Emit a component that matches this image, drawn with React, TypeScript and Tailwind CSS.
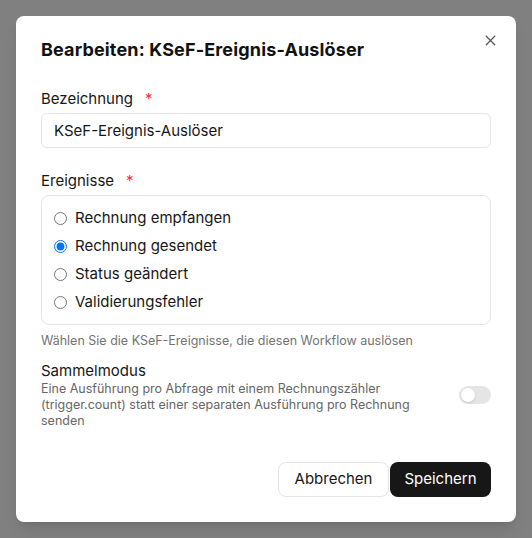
import { useState } from 'react';
import { X } from 'lucide-react';

const events = [
  'Rechnung empfangen',
  'Rechnung gesendet',
  'Status geändert',
  'Validierungsfehler',
];

export default function App() {
  const [name, setName] = useState('KSeF-Ereignis-Auslöser');
  const [selected, setSelected] = useState('Rechnung gesendet');
  const [batch, setBatch] = useState(false);

  return (
    <div
      className="min-h-screen w-full bg-[#808080] pt-4 pl-4"
      style={{ fontFamily: 'Inter, "Liberation Sans", sans-serif' }}
    >
      <div className="relative w-[500px] rounded-lg bg-white px-[25px] pt-5 pb-[25px] shadow-lg">
        <button className="absolute right-[17px] top-4 flex text-[#555]">
          <X size={17} strokeWidth={1.8} />
        </button>

        <h2 className="text-[18px] font-bold leading-7 tracking-[0.15px] text-[#111]">
          Bearbeiten: KSeF-Ereignis-Auslöser
        </h2>

        <label className="mt-[25px] flex text-[15px] leading-5 text-[#171717]">
          Bezeichnung
          <span className="ml-3 text-red-500">*</span>
        </label>
        <input
          value={name}
          onChange={(e) => setName(e.target.value)}
          className="mt-1 h-[35px] w-full rounded-md border border-[#e5e5e5] px-3 text-[15px] text-[#171717] outline-none"
        />

        <label className="mt-[23px] flex text-[15px] leading-5 text-[#171717]">
          Ereignisse
          <span className="ml-3 text-red-500">*</span>
        </label>
        <div className="mt-1 rounded-lg border border-[#e5e5e5] px-3 py-2">
          {events.map((ev) => (
            <label key={ev} className="flex h-7 items-center gap-2 text-[15px] text-[#171717]">
              <input
                type="radio"
                name="event"
                checked={selected === ev}
                onChange={() => setSelected(ev)}
                className="h-[13px] w-[13px]"
              />
              {ev}
            </label>
          ))}
        </div>
        <p className="mt-2 text-[12.5px] leading-4 text-[#737373]">
          Wählen Sie die KSeF-Ereignisse, die diesen Workflow auslösen
        </p>

        <div className="mt-3 flex items-center justify-between">
          <div className="max-w-[385px]">
            <div className="text-[15px] leading-5 text-[#171717]">Sammelmodus</div>
            <p className="text-[12.5px] leading-4 text-[#666]">
              Eine Ausführung pro Abfrage mit einem Rechnungszähler (trigger.count) statt einer
              separaten Ausführung pro Rechnung senden
            </p>
          </div>
          <button
            onClick={() => setBatch(!batch)}
            className={`flex h-[18px] w-8 items-center rounded-full p-[2px] ${batch ? 'bg-[#171717]' : 'bg-[#e5e5e5]'}`}
          >
            <span
              className={`h-[14px] w-[14px] rounded-full bg-white shadow ${batch ? 'translate-x-[14px]' : ''}`}
            />
          </button>
        </div>

        <div className="mt-[33px] flex justify-end gap-[1px]">
          <button className="h-[35px] w-[111px] rounded-lg border border-[#e5e5e5] bg-white text-[15px] text-[#171717]">
            Abbrechen
          </button>
          <button className="h-[35px] w-[101px] rounded-lg bg-[#171717] text-[15px] text-white">
            Speichern
          </button>
        </div>
      </div>
    </div>
  );
}
